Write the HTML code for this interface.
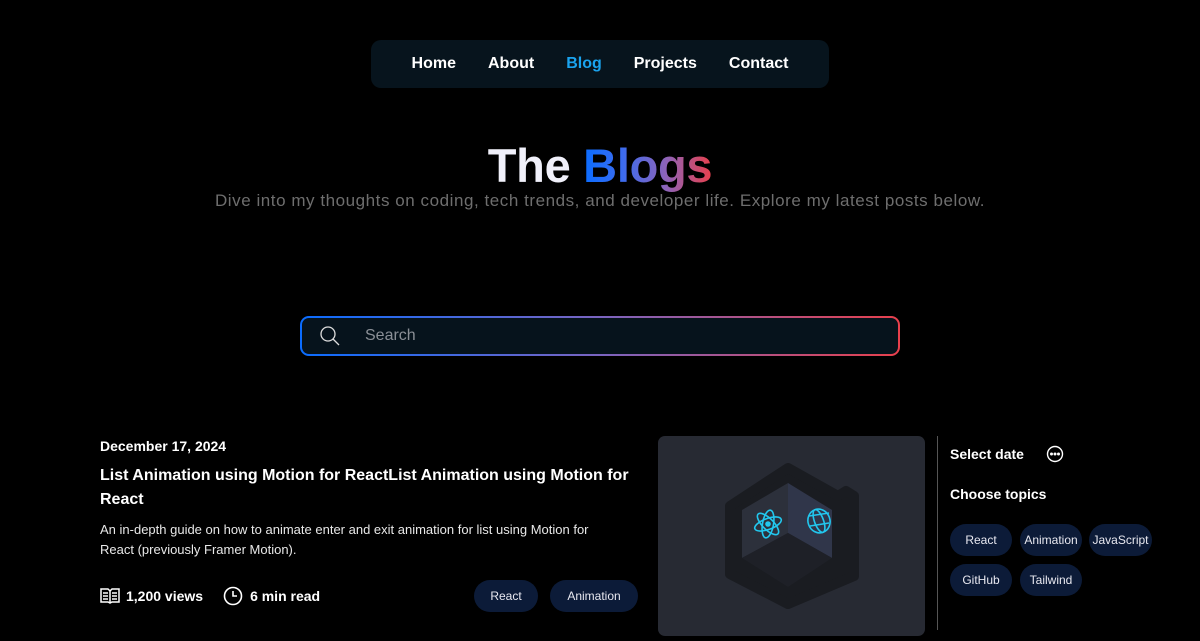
<!DOCTYPE html>
<html><head><meta charset="utf-8"><style>
*{margin:0;padding:0;box-sizing:border-box}
body{width:1200px;height:630px;background:#000;font-family:"Liberation Sans",sans-serif;color:#fff;position:relative;overflow:hidden}
.nav{position:absolute;left:371px;top:40px;width:458px;height:48px;background:#07141d;border-radius:10px;display:flex;justify-content:center;align-items:center;gap:32px;font-weight:bold;font-size:16px}
.nav span.a{color:#1aa3ee}
h1{position:absolute;top:138px;width:100%;text-align:center;font-size:47px;font-weight:bold;letter-spacing:-0.3px;color:#f0f0fa}
h1 span{background:linear-gradient(90deg,#0a6cff 0%,#3b6cf0 30%,#8e63b8 65%,#e8404c 100%);-webkit-background-clip:text;background-clip:text;color:transparent}
.sub{position:absolute;top:191px;width:100%;text-align:center;font-size:17px;letter-spacing:0.55px;color:#6e6e6e}
.search{position:absolute;left:300px;top:316px;width:600px;height:40px;border-radius:9px;background:linear-gradient(90deg,#0a6cff,#7a64c0,#e8404c);padding:2px}
.search div{width:100%;height:100%;background:#06131c;border-radius:7px;position:relative;color:#8a8f96;font-size:16px;line-height:36px;padding-left:63px}
.search svg{position:absolute;left:16px;top:6px}
.date{position:absolute;left:100px;top:438px;font-size:14px;font-weight:bold}
.title{position:absolute;left:100px;top:464px;width:540px;font-size:16px;font-weight:bold;line-height:24px}
.desc{position:absolute;left:100px;top:520px;width:520px;font-size:13px;line-height:20px;color:#e8e8e8}
.meta{position:absolute;left:100px;top:586px;font-size:14px;font-weight:bold;display:flex;align-items:center}
.pill{position:absolute;height:32px;border-radius:16px;background:#0c1b38;font-size:12px;color:#e8e8f0;display:flex;align-items:center;justify-content:center}
.img{position:absolute;left:658px;top:436px;width:267px;height:200px;background:#272a33;border-radius:7px}
.vl{position:absolute;left:937px;top:436px;width:1px;height:194px;background:#555}
.side{position:absolute;left:950px;font-size:14px;font-weight:bold}
</style></head><body>
<div class="nav"><span>Home</span><span>About</span><span class="a">Blog</span><span>Projects</span><span>Contact</span></div>
<h1>The <span>Blogs</span></h1>
<div class="sub">Dive into my thoughts on coding, tech trends, and developer life. Explore my latest posts below.</div>
<div class="search"><div><svg width="24" height="24" viewBox="0 0 24 24" fill="none" stroke="#ddd" stroke-width="1.3"><circle cx="10" cy="10" r="7"/><path d="M15 15l6 6"/></svg>Search</div></div>
<div class="date">December 17, 2024</div>
<div class="title">List Animation using Motion for ReactList Animation using Motion for React</div>
<div class="desc">An in-depth guide on how to animate enter and exit animation for list using Motion for React (previously Framer Motion).</div>
<div class="meta"><svg width="20" height="18" viewBox="0 0 20 18" fill="none" stroke="#fff" stroke-width="1.5"><path d="M1 2h7l2 2 2-2h7v13h-7l-2 1-2-1H1z"/><path d="M10 4v12M3 6h5M3 9h5M3 12h5M12 6h5M12 9h5M12 12h5"/></svg><span style="margin-left:6px">1,200 views</span>
<svg style="margin-left:20px" width="20" height="20" viewBox="0 0 20 20" fill="none" stroke="#fff" stroke-width="1.6"><circle cx="10" cy="10" r="8.5"/><path d="M10 5v5h4"/></svg><span style="margin-left:7px">6 min read</span></div>
<div class="pill" style="left:474px;top:580px;width:64px">React</div>
<div class="pill" style="left:550px;top:580px;width:88px">Animation</div>
<div class="img"><svg width="267" height="200" viewBox="0 0 267 200">
<path d="M130 32 L180 60 L188 55 L196 60 L196 140 L130 168 L72 138 L72 70 Z" fill="#1a1c21" stroke="#1a1c21" stroke-width="10" stroke-linejoin="round"/>
<path d="M130 47 L84 74 L84 122 L130 97 Z" fill="#2c303b"/>
<path d="M130 47 L174 74 L174 122 L130 97 Z" fill="#30364a"/>
<path d="M84 122 L130 97 L174 122 L130 151 Z" fill="#1e2027"/>
<g fill="none" stroke="#22c7ee" stroke-width="1.6"><ellipse cx="110" cy="88" rx="14" ry="5.5" transform="rotate(-20 110 88)"/><ellipse cx="110" cy="88" rx="14" ry="5.5" transform="rotate(45 110 88)"/><ellipse cx="110" cy="88" rx="14" ry="5.5" transform="rotate(100 110 88)"/><circle cx="110" cy="88" r="2" fill="#22c7ee"/>
<ellipse cx="161" cy="85" rx="11" ry="12" transform="rotate(-20 161 85)"/><ellipse cx="161" cy="85" rx="4.5" ry="12" transform="rotate(-20 161 85)"/><path d="M151 80l20 -3M152 90l19 -3"/></g>
</svg></div>
<div class="vl"></div>
<div class="side" style="top:446px">Select date</div>
<svg style="position:absolute;left:1046px;top:445px" width="18" height="18" viewBox="0 0 18 18" fill="none" stroke="#fff" stroke-width="1.4"><circle cx="9" cy="9" r="7.5"/><circle cx="5.5" cy="9" r=".8" fill="#fff"/><circle cx="9" cy="9" r=".8" fill="#fff"/><circle cx="12.5" cy="9" r=".8" fill="#fff"/></svg>
<div class="side" style="top:486px">Choose topics</div>
<div class="pill" style="left:950px;top:524px;width:62px">React</div>
<div class="pill" style="left:1020px;top:524px;width:62px">Animation</div>
<div class="pill" style="left:1089px;top:524px;width:63px">JavaScript</div>
<div class="pill" style="left:950px;top:564px;width:62px">GitHub</div>
<div class="pill" style="left:1020px;top:564px;width:62px">Tailwind</div>
</body></html>
